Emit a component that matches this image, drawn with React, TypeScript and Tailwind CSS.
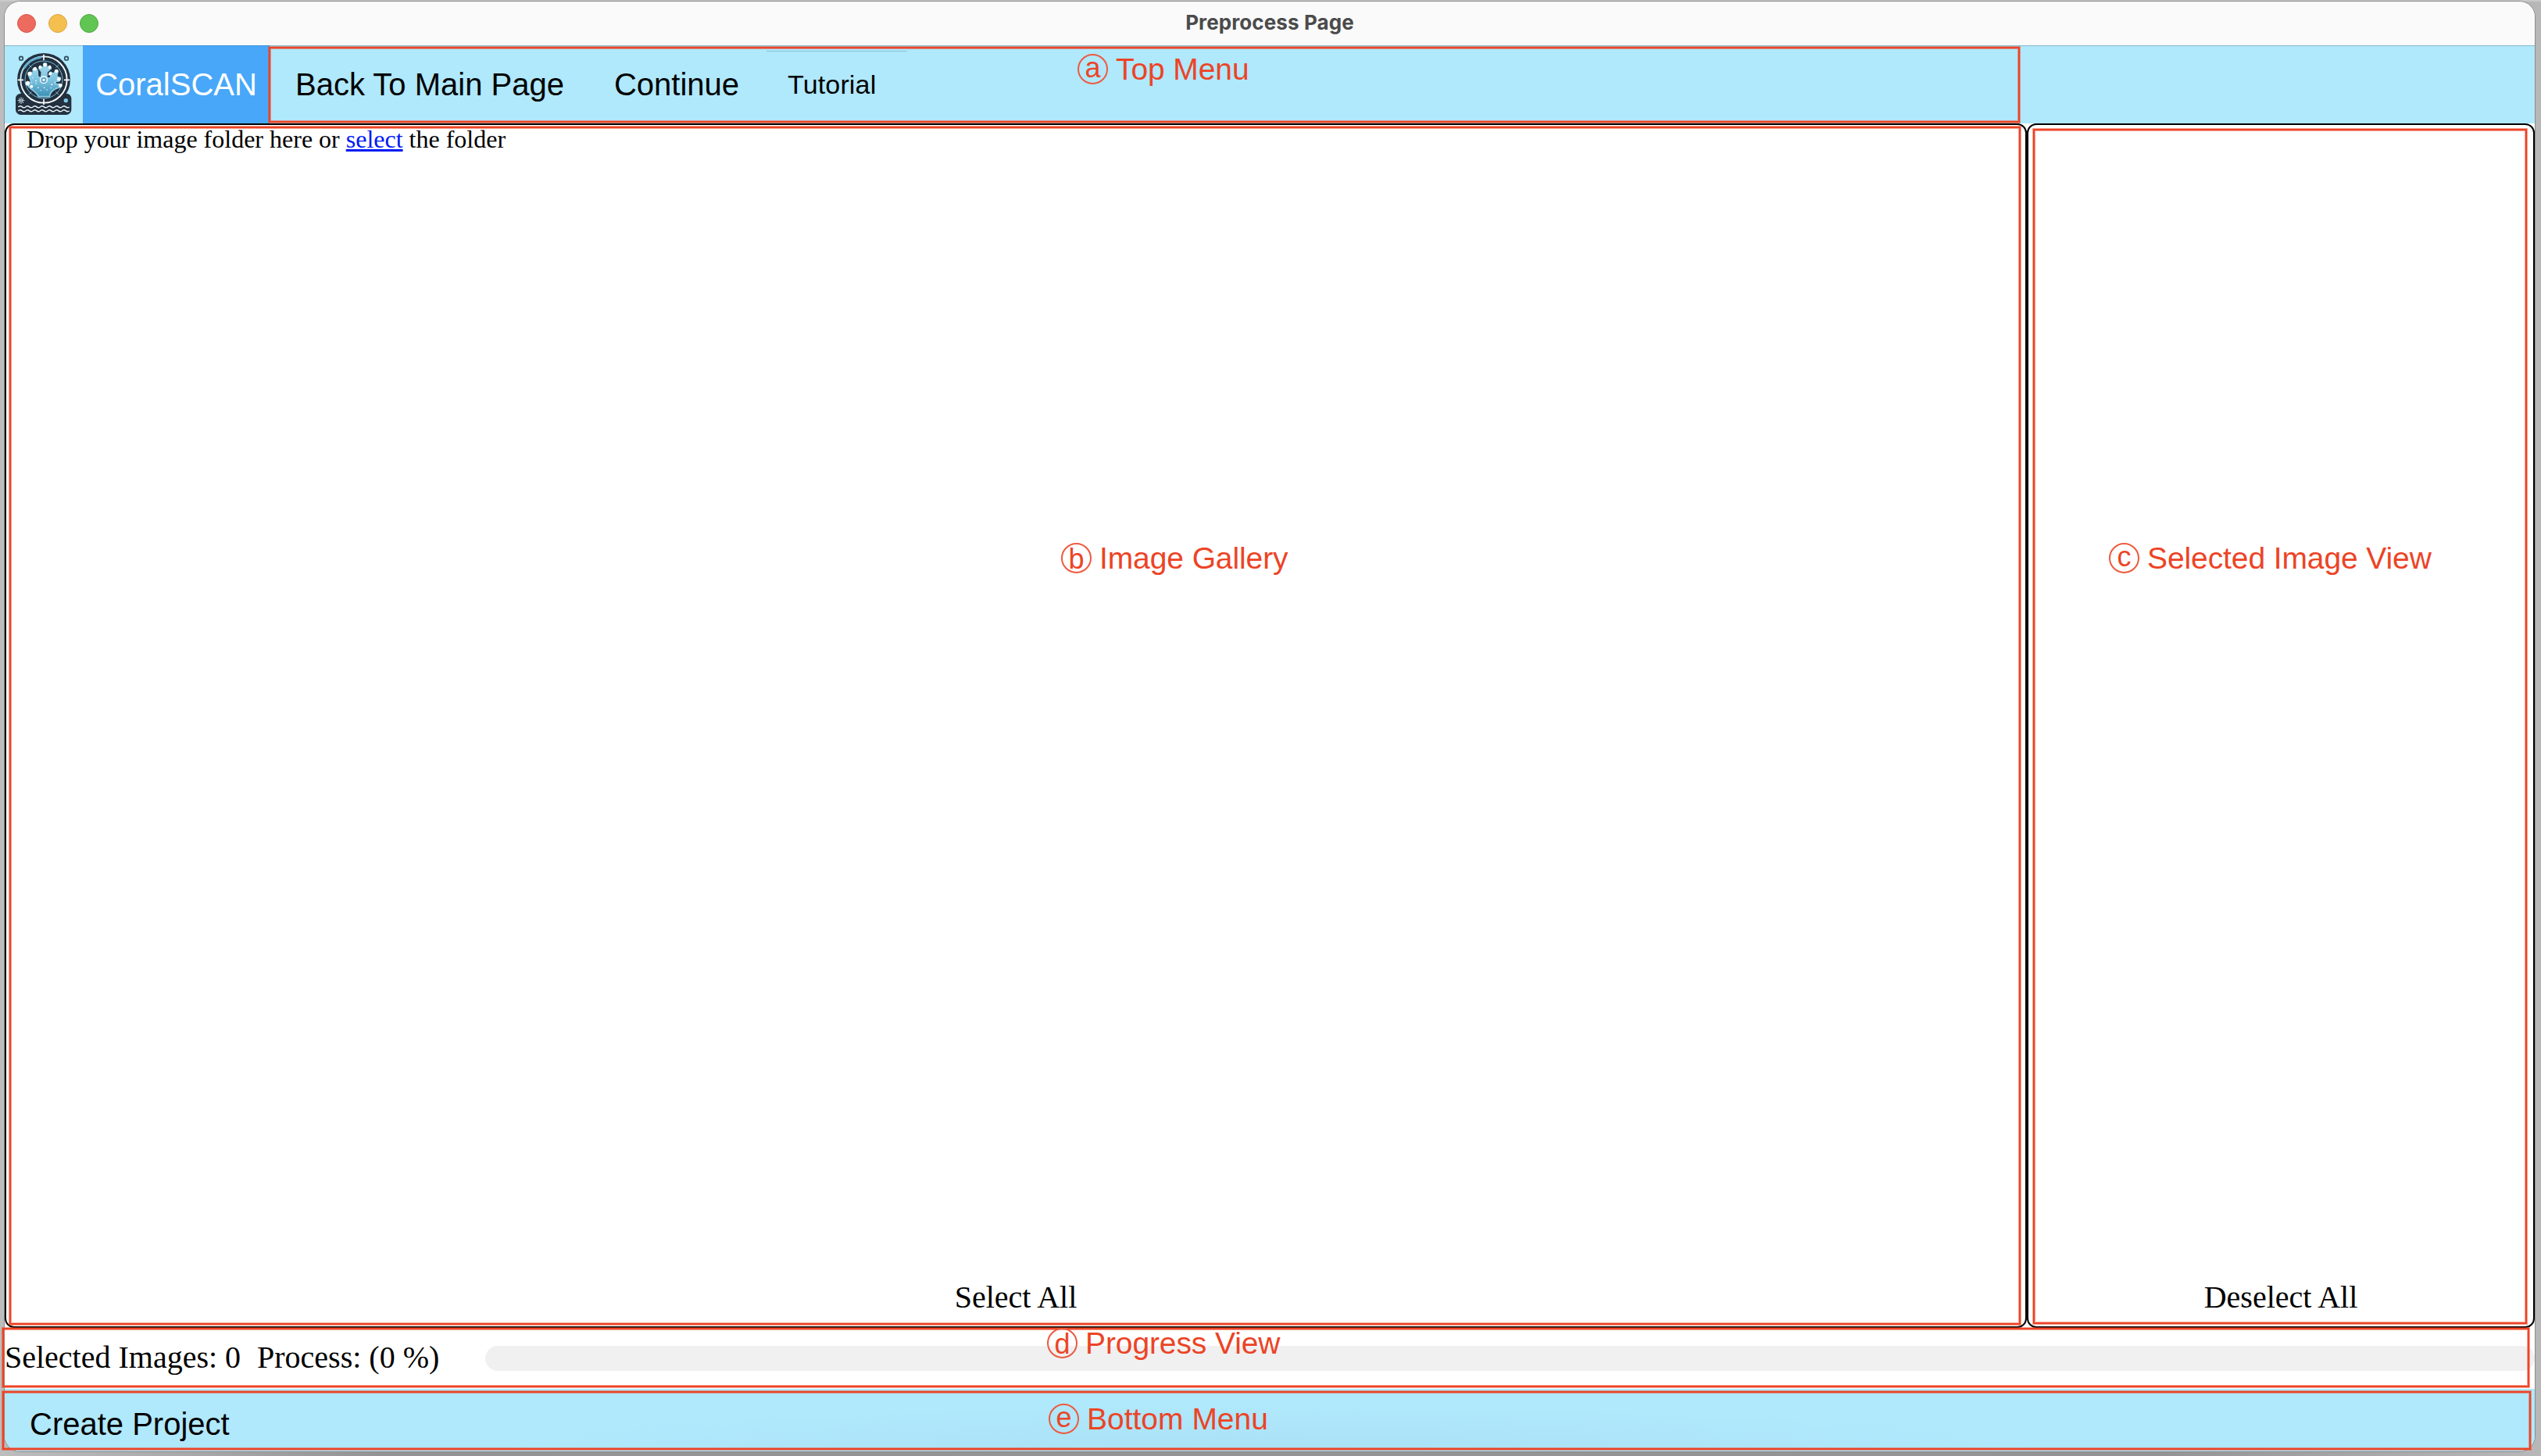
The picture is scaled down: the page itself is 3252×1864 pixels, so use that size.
import React from "react";

const arial = "font-['Liberation_Sans',Arial,sans-serif]";
const times = "font-['Liberation_Serif','Times_New_Roman',serif]";

function Logo() {
  return (
    <svg viewBox="-12 12 300 297" className="h-[99px] w-[100px] shrink-0">
      <defs>
        <linearGradient id="coral" x1="0" y1="0" x2="0" y2="1">
          <stop offset="0" stopColor="#a9dcee" />
          <stop offset="0.5" stopColor="#7cc3df" />
          <stop offset="1" stopColor="#3b90b6" />
        </linearGradient>
        <linearGradient id="rim" x1="0" y1="0" x2="1" y2="1">
          <stop offset="0" stopColor="#8ccbe4" />
          <stop offset="0.3" stopColor="#e8f6fb" />
          <stop offset="1" stopColor="#ffffff" />
        </linearGradient>
      </defs>
      <rect x="30" y="194" width="214" height="82" rx="20" fill="#22303f" />
      <circle cx="138" cy="141" r="102" fill="#22303f" />
      <circle cx="138" cy="141" r="89" fill="none" stroke="url(#rim)" strokeWidth="5.5" />
      <path d="M62 98A87 87 0 0 1 128 55" fill="none" stroke="#63b0d2" strokeWidth="8" />
      <circle cx="138" cy="141" r="72" fill="none" stroke="#79bdd8" strokeWidth="3" />
      <g stroke="#6ba9c4" strokeWidth="3">
        <path d="M80 83l12 12M196 83l-12 12M80 199l12-12M196 199l-12-12" />
      </g>
      <path d="M118 206C112 190 96 184 84 172L72 158L76 148L92 154L80 124L88 112L98 118L96 102L106 94L114 106L116 130L128 134L130 112L120 98L124 88L136 96L138 78L148 78L150 94L162 88L166 98L150 112L150 134L162 136L166 122L158 122L164 112L176 118L184 104L192 108L188 128L202 134L198 146L184 148L182 158L202 158L204 168L180 178C170 184 162 194 160 206Z" fill="url(#coral)" stroke="#8dcde5" strokeWidth="5" strokeLinejoin="round" />
      <g fill="#fff">
        <circle cx="143" cy="84" r="7" /><circle cx="124" cy="93" r="6" /><circle cx="161" cy="93" r="6" />
        <circle cx="104" cy="100" r="7" /><circle cx="84" cy="118" r="8" /><circle cx="76" cy="155" r="8" />
        <circle cx="187" cy="108" r="7" /><circle cx="163" cy="118" r="6" /><circle cx="196" cy="139" r="7" />
        <circle cx="202" cy="163" r="7" /><circle cx="91" cy="167" r="6" />
        <circle cx="96" cy="134" r="2" /><circle cx="108" cy="146" r="2.5" /><circle cx="108" cy="156" r="2" />
        <circle cx="117" cy="172" r="2.5" /><circle cx="140" cy="172" r="2.5" /><circle cx="169" cy="160" r="3" />
        <circle cx="166" cy="173" r="2" /><circle cx="126" cy="182" r="2" /><circle cx="180" cy="152" r="2" /><circle cx="150" cy="180" r="2" />
      </g>
      <circle cx="138" cy="142" r="13" fill="#5aa4c4" stroke="#fff" strokeWidth="4" />
      <circle cx="138" cy="142" r="5" fill="#fff" />
      <path d="M138 44v22M138 215v22M38 142h22M216 142h22" stroke="#fff" strokeWidth="5" />
      <circle cx="51" cy="59" r="7" fill="none" stroke="#2f4c60" strokeWidth="5" />
      <circle cx="225" cy="59" r="7" fill="none" stroke="#2f4c60" strokeWidth="5" />
      <circle cx="223" cy="221" r="8" fill="#7cc8e6" />
      <path d="M51 208v26M44 212v5M58 212v5M44 226v5M58 226v5M38 221h7M57 221h7M47 216v10M55 216v10" stroke="#d5e6ee" strokeWidth="3" fill="none" />
      <g fill="none" stroke="#e9f6fb" strokeWidth="4.5">
        <path d="M40 246q7-7 14-1t14 1q7-7 14-1t14 1q7-7 14-1t14 1q7-7 14-1t14 1q7-7 14-1t14 1q7-7 14-1t14 1q7-7 14-1t14 1" />
        <path d="M40 261q7-7 14-1t14 1q7-7 14-1t14 1q7-7 14-1t14 1q7-7 14-1t14 1q7-7 14-1t14 1q7-7 14-1t14 1q7-7 14-1t14 1" />
      </g>
    </svg>
  );
}

function Note({ mark, label, place, tall = false, spacing = "tracking-[-0.1px]" }: { mark: string; label: string; place: string; tall?: boolean; spacing?: string }) {
  return (
    <div className={`absolute flex h-[46px] items-center whitespace-nowrap text-[#ec4426] ${arial} ${place}`}>
      <span className="mb-[2px] mr-[10px] size-[39px] rounded-full border-2 border-[#ee5a3f] text-center text-[36px] leading-[35px]">
        <span className={tall ? "relative top-[1px]" : "relative -top-[2px]"}>{mark}</span>
      </span>
      <span className={`text-[39px] leading-[46px] ${spacing}`}>{label}</span>
    </div>
  );
}

function Frame({ place }: { place: string }) {
  return (
    <div className={`pointer-events-none absolute border-2 border-[#ec4426] shadow-[0_0_0_1px_rgba(236,68,38,0.5),inset_0_0_0_1px_rgba(236,68,38,0.5)] ${place}`} />
  );
}

export default function App() {
  return (
    <div className="relative h-[1864px] w-[3252px] overflow-hidden bg-[linear-gradient(to_right,#bdbdbd,#949494_15%,#949494_85%,#b8b8b8)] pl-[6px] pt-[2px]">
      <div className="absolute left-0 top-0 h-[2px] w-full bg-[#c9c9c9]" />
      <div className="relative flex h-[1856px] w-[3238px] flex-col overflow-hidden rounded-[20px] bg-white shadow-[0_0_0_1px_#8c8c8c]">
        <header className="relative flex h-[56px] shrink-0 items-center gap-4 bg-[#fafafa] pl-[16px]">
          <span className="size-6 rounded-full border border-[#d9564c] bg-[#ed6a5e]" />
          <span className="size-6 rounded-full border border-[#dba53f] bg-[#f5bf4f]" />
          <span className="size-6 rounded-full border border-[#51a73e] bg-[#61c554]" />
          <h1 className="absolute inset-x-0 top-0 text-center font-['Inter',sans-serif] text-[26px] font-bold leading-[53px] tracking-[0.1px] text-[#4a4b4b]">Preprocess Page</h1>
        </header>

        <nav className={`flex h-[100px] shrink-0 border-t border-[#86b9cb] bg-[#b0e8fc] text-[40px] leading-[98px] text-black ${arial}`}>
          <Logo />
          <div className="-mt-px w-[239px] shrink-0 border-t border-[#3d8fd8] bg-[#48a7f9] text-center text-white">CoralSCAN</div>
          <a className="ml-[33px]">Back To Main Page</a>
          <a className="ml-[64px]">Continue</a>
          <a className="relative ml-[35px] w-[180px] text-[34px] tracking-[0.15px]">
            <span className="absolute inset-x-0 top-[6px] h-[1px] bg-[#86c0da]" />
            <span className="ml-[27px]">Tutorial</span>
          </a>
        </nav>

        <main className={`flex h-[1542px] shrink-0 text-[40px] text-black ${times}`}>
          <section className="flex w-[2588px] flex-col justify-between rounded-[12px] border-2 border-black">
            <p className="pl-[26px] text-[32px] leading-[36px]">
              Drop your image folder here or <a className="text-[#0019f5] underline decoration-[3px]">select</a> the folder
            </p>
            <button className="pb-[14px] leading-[46px]">Select All</button>
          </section>
          <section className="flex w-[650px] flex-col justify-end rounded-[12px] border-2 border-black">
            <button className="pb-[14px] leading-[46px]">Deselect All</button>
          </section>
        </main>

        <div className={`flex h-[78px] shrink-0 items-center text-[40px] leading-[46px] text-black ${times}`}>
          <span className="mb-[2px] w-[323px] shrink-0">Selected Images: 0</span>
          <span className="mb-[2px] w-[292px] shrink-0">Process: (0 %)</span>
          <div className="h-[32px] flex-1 rounded-full bg-[#f0f0f0]" />
        </div>

        <footer className={`relative h-[80px] shrink-0 bg-[#b0e8fc] pl-[32px] text-[40px] leading-[90px] text-black ${arial}`}>
          <div className="absolute inset-0 bg-[radial-gradient(ellipse_1000px_60px_at_50%_100%,rgba(130,175,200,0.13),transparent)]" />
          <span className="relative">Create Project</span>
        </footer>
      </div>

      <Frame place="left-[344px] top-[60px] h-[97px] w-[2241px]" />
      <Frame place="left-[12px] top-[162px] h-[1534px] w-[2574px]" />
      <Frame place="left-[2602px] top-[165px] h-[1530px] w-[632px]" />
      <Frame place="left-[3px] top-[1700px] h-[76px] w-[3234px]" />
      <Frame place="left-[3px] top-[1781px] h-[75px] w-[3236px]" />

      <Note mark="a" label="Top Menu" place="left-[1379px] top-[66px]" />
      <Note mark="b" label="Image Gallery" place="left-[1358px] top-[692px]" tall />
      <Note mark="c" label="Selected Image View" place="left-[2699px] top-[692px]" />
      <Note mark="d" label="Progress View" place="left-[1340px] top-[1697px]" tall />
      <Note mark="e" label="Bottom Menu" place="left-[1342px] top-[1794px]" spacing="tracking-normal" />
    </div>
  );
}
